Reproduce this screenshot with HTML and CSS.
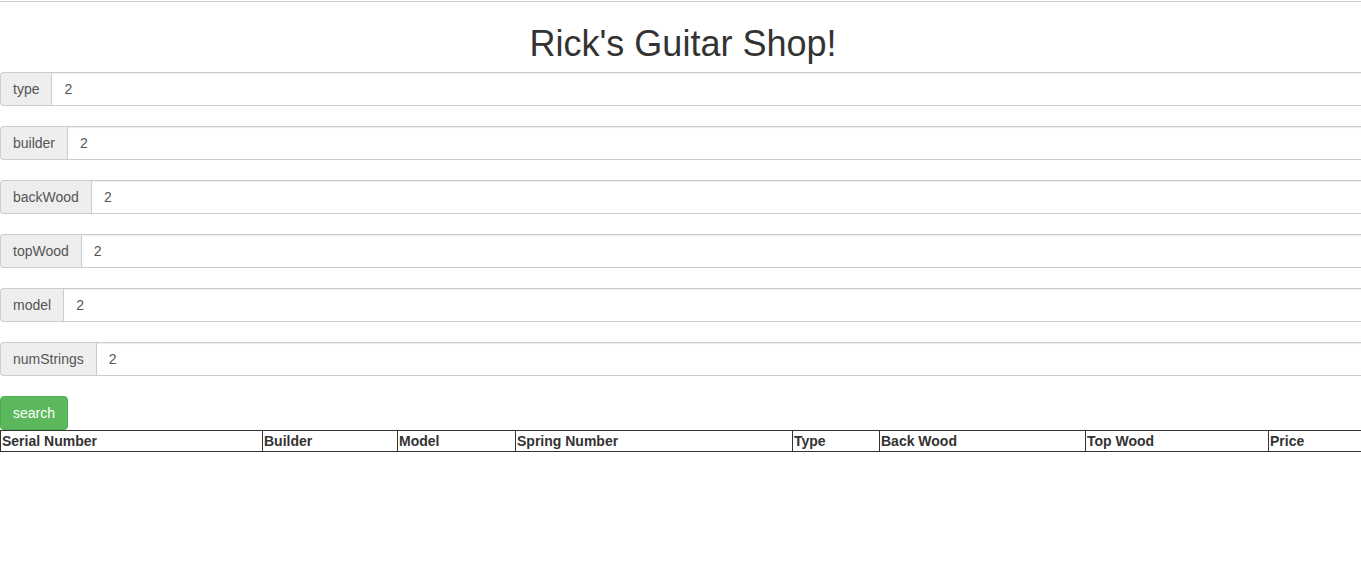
FILE: index.html
```html
<!DOCTYPE html>
<html>
<head>
<meta charset="utf-8">
<title>Rick's Guitar Shop!</title>
<link rel="stylesheet" href="styles.css">
</head>
<body>
<div class="page">
  <div class="topline"></div>
  <h1 class="title">Rick's Guitar Shop!</h1>
  <form class="search-form">
    <div class="input-group"><span class="addon">type</span><input class="field" type="text" value="2"></div>
    <div class="input-group"><span class="addon">builder</span><input class="field" type="text" value="2"></div>
    <div class="input-group"><span class="addon">backWood</span><input class="field" type="text" value="2"></div>
    <div class="input-group"><span class="addon">topWood</span><input class="field" type="text" value="2"></div>
    <div class="input-group"><span class="addon">model</span><input class="field" type="text" value="2"></div>
    <div class="input-group"><span class="addon">numStrings</span><input class="field" type="text" value="2"></div>
    <div class="btn-row"><button type="button" class="btn-search">search</button></div>
  </form>
  <table class="results">
    <colgroup>
      <col class="c1"><col class="c2"><col class="c3"><col class="c4"><col class="c5"><col class="c6"><col class="c7"><col class="c8">
    </colgroup>
    <thead>
      <tr>
        <th>Serial Number</th><th>Builder</th><th>Model</th><th>Spring Number</th><th>Type</th><th>Back Wood</th><th>Top Wood</th><th>Price</th>
      </tr>
    </thead>
  </table>
</div>
</body>
</html>
```
FILE: styles.css
```css
html, body {
  margin: 0;
  padding: 0;
  overflow: hidden;
  background: #fff;
}
body {
  font-family: "Liberation Sans", Arial, Helvetica, sans-serif;
  font-size: 14px;
  line-height: 20px;
  color: #333;
}
.page {
  width: 1366px;
}
.topline {
  margin-top: 1px;
  border-top: 1px solid #ccc;
}
.title {
  margin: 22px 0 8px;
  font-size: 36px;
  font-weight: 500;
  line-height: 40px;
  text-align: center;
  color: #333;
}
.search-form {
  margin: 0;
}
.input-group {
  display: flex;
  height: 34px;
  margin-bottom: 20px;
}
.addon {
  display: flex;
  align-items: center;
  padding: 6px 12px;
  background: #eee;
  border: 1px solid #ccc;
  border-right: 0;
  border-radius: 4px 0 0 4px;
  color: #555;
  font-size: 14px;
  box-sizing: border-box;
}
.field {
  flex: 1;
  min-width: 0;
  height: 34px;
  box-sizing: border-box;
  padding: 6px 12px;
  border: 1px solid #ccc;
  border-radius: 0;
  box-shadow: inset 0 1px 1px rgba(0,0,0,.075);
  font-family: inherit;
  font-size: 14px;
  color: #555;
  outline: none;
  margin: 0;
}
.btn-row {
  display: flex;
}
.btn-search {
  height: 34px;
  padding: 6px 12px;
  box-sizing: border-box;
  background: #5cb85c;
  border: 1px solid #4cae4c;
  border-radius: 4px;
  color: #fff;
  font-family: inherit;
  font-size: 14px;
  line-height: 20px;
  margin: 0;
}
.results {
  border-collapse: collapse;
  table-layout: fixed;
  width: 1366px;
}
.results th {
  border: 1px solid #333;
  padding: 0 1px;
  text-align: left;
  font-weight: bold;
  font-size: 14px;
  line-height: 20px;
  color: #333;
}
.c1 { width: 262px; }
.c2 { width: 135px; }
.c3 { width: 118px; }
.c4 { width: 277px; }
.c5 { width: 87px; }
.c6 { width: 206px; }
.c7 { width: 183px; }
.c8 { width: 98px; }
```
